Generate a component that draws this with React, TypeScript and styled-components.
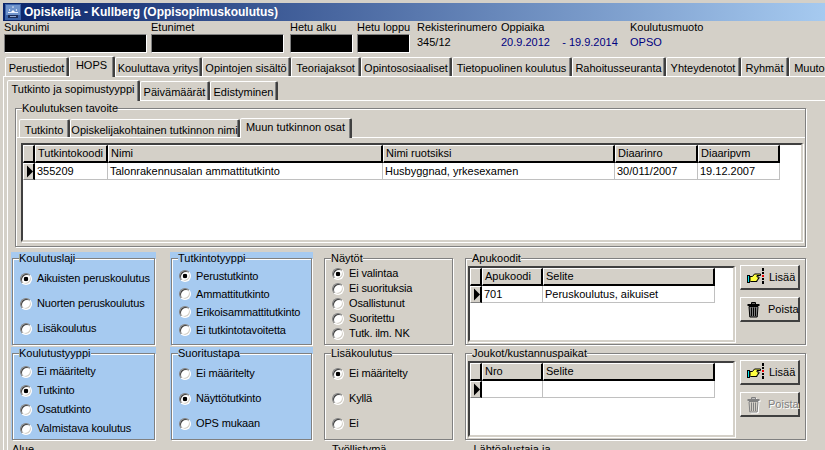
import React from "react";
import styled, { createGlobalStyle } from "styled-components";

const GlobalStyle = createGlobalStyle`
    html, body {
        margin: 0;
        padding: 0;
        background: #D4D0C8;
    }
    * {
        box-sizing: border-box;
    }
`;

const Screen = styled.div`
    width: 825px;
    height: 450px;
    overflow: hidden;
    padding-top: 3px;
    background: #D4D0C8;
    color: #000;
    font-family: "Liberation Sans", Arial, sans-serif;
    font-size: 11px;
    line-height: 13px;
`;

const TitleBar = styled.div`
    height: 18px;
    margin-left: 3px;
    padding-left: 2px;
    display: flex;
    align-items: center;
    gap: 3px;
    background: linear-gradient(90deg, #0A246A, #A6CAF0);
    color: #fff;
    font-size: 12px;
    font-weight: 700;
    white-space: nowrap;
`;

const Header = styled.div`
    height: 35px;
    padding-left: 4px;
    display: flex;
`;

const HeaderCol = styled.div<{ $w: number; $ml?: number }>`
    width: ${(p) => p.$w}px;
    margin-left: ${(p) => p.$ml || 0}px;
    flex: none;
    white-space: nowrap;
`;

const Masked = styled.div`
    height: 19px;
    background: #000;
    border: 1px solid;
    border-color: #808080 #fff #fff #808080;
`;

const HeaderValue = styled.div<{ $blue?: boolean }>`
    height: 17px;
    line-height: 17px;
    color: ${(p) => (p.$blue ? "#000080" : "#000")};
    white-space: pre;
`;

const TabRow = styled.div<{ $h: number; $pl: number }>`
    height: ${(p) => p.$h}px;
    padding-left: ${(p) => p.$pl}px;
    display: flex;
    align-items: flex-end;
    position: relative;
    z-index: 1;
    white-space: nowrap;
`;

const Tab = styled.div<{ $w: number; $active?: boolean; $h: number }>`
    flex: none;
    width: ${(p) => p.$w}px;
    height: ${(p) => p.$h + (p.$active ? 2 : 0)}px;
    margin-bottom: ${(p) => (p.$active ? -1 : 0)}px;
    padding-top: ${(p) => (p.$active ? 2 : 4)}px;
    text-align: center;
    background: #D4D0C8;
    border-style: solid;
    border-width: 1px 2px 0 1px;
    border-color: #fff #404040 transparent #fff;
    border-radius: 2px 2px 0 0;
    box-shadow: inset -1px 0 0 #808080;
`;

const OuterPage = styled.div`
    margin-left: 3px;
    width: 900px;
    height: 380px;
    padding: 2px 0 0 3px;
    border-top: 1px solid #fff;
    border-left: 1px solid #fff;
`;

const InnerPage = styled.div`
    width: 880px;
    height: 360px;
    padding-top: 1px;
    border-top: 1px solid #fff;
    border-left: 1px solid #fff;
`;

const GroupBox = styled.fieldset<{ $blue?: boolean }>`
    margin: 0;
    padding: 0;
    min-width: 0;
    height: 100%;
    border: 1px solid #808080;
    box-shadow: 1px 1px 0 #fff, inset 1px 1px 0 #fff;
    legend {
        margin-left: 6px;
        padding: 0;
        height: 13px;
        line-height: 13px;
        background: ${(p) => (p.$blue ? "#A6CAF0" : "#D4D0C8")};
        white-space: nowrap;
    }
`;

const GoalBox = styled.div`
    height: 145px;
    margin: 0 0 0 7px;
    width: 791px;
`;

const GoalPage = styled.div`
    height: 106px;
    padding: 5px 0 0 4px;
    border-top: 1px solid #fff;
    border-left: 1px solid #fff;
`;

const GridFrame = styled.div<{ $h: number; $w: number }>`
    width: ${(p) => p.$w}px;
    height: ${(p) => p.$h}px;
    background: #fff;
    border: 2px solid;
    border-color: #404040 #d4d0c8 #d4d0c8 #404040;
    box-shadow: 1px 1px 0 #fff;
    overflow: hidden;
`;

const DataTable = styled.table`
    border-collapse: separate;
    border-spacing: 0;
    table-layout: fixed;
    th {
        height: 18px;
        padding: 0 0 0 2px;
        background: #D4D0C8;
        font-weight: 400;
        text-align: left;
        white-space: nowrap;
        overflow: hidden;
        border-style: solid;
        border-width: 1px 2px 2px 1px;
        border-color: #fff #000 #000 #fff;
    }
    td {
        height: 17px;
        padding: 0 0 0 2px;
        white-space: nowrap;
        overflow: hidden;
        border-right: 1px solid #C0C0C0;
        border-bottom: 1px solid #C0C0C0;
    }
    td.indicator {
        padding: 0;
        background: #D4D0C8;
        border-style: solid;
        border-width: 1px 2px 1px 1px;
        border-color: #fff #000 #808080 #fff;
    }
`;

const PanelRow = styled.div`
    height: 95px;
    display: flex;
    align-items: flex-start;
`;

const Panel = styled.div<{ $w: number; $ml: number; $blue?: boolean }>`
    flex: none;
    width: ${(p) => p.$w}px;
    height: 93px;
    margin-left: ${(p) => p.$ml}px;
    padding: 0 1px;
    background: ${(p) => (p.$blue ? "#A6CAF0" : "transparent")};
`;

const Rows = styled.div`
    margin-top: 5px;
`;

const RadioList = styled.div<{ $top: number; $row: number }>`
    padding: ${(p) => p.$top}px 0 0 7px;
    display: grid;
    grid-auto-rows: ${(p) => p.$row}px;
`;

const RadioLabel = styled.label`
    display: flex;
    align-items: center;
    gap: 5px;
    letter-spacing: -0.15px;
    white-space: nowrap;
`;

const RadioInput = styled.input`
    appearance: none;
    flex: none;
    width: 12px;
    height: 12px;
    margin: 0;
    border-radius: 50%;
    background: #fff;
    border: 1px solid;
    border-color: #808080 #fff #fff #808080;
    box-shadow: inset 1px 1px 0 #404040, inset -1px -1px 0 #D4D0C8;
    &:checked {
        background: radial-gradient(circle at center, #000 2px, #fff 2.6px);
    }
`;

const GridWithButtons = styled.div`
    padding: 1px 0 0 2px;
    display: flex;
    gap: 5px;
`;

const SideButtons = styled.div`
    display: flex;
    flex-direction: column;
    gap: 7px;
    margin-top: -1px;
`;

const ToolButton = styled.button<{ $off?: boolean; $gap: number }>`
    width: 60px;
    height: 25px;
    padding: 0 0 0 6px;
    display: flex;
    align-items: center;
    gap: ${(p) => p.$gap}px;
    background: #D4D0C8;
    font: inherit;
    color: ${(p) => (p.$off ? "#808080" : "#000")};
    text-shadow: ${(p) => (p.$off ? "1px 1px 0 #fff" : "none")};
    border-style: solid;
    border-width: 1px 2px 2px 1px;
    border-color: #fff #404040 #404040 #fff;
`;

const BottomRow = styled.div`
    display: flex;
    margin-top: 1px;
`;

const BottomLabel = styled.div<{ $ml: number }>`
    margin-left: ${(p) => p.$ml}px;
    white-space: nowrap;
`;

const AppIcon = () => (
    <svg width="16" height="16" viewBox="0 0 16 16">
        <rect width="16" height="16" fill="#3A62A8" />
        <rect x="1" y="1" width="14" height="10" fill="#6F93CC" />
        <path d="M8 2l1 1.500h-2zM4 5l1.500 1-1.500 1zM12 5l-1.500 1 1.500 1zM8 6l2 2h-4z" fill="#fff" />
        <rect x="3" y="8" width="10" height="1" fill="#E8F0FF" />
        <rect x="3" y="11" width="10" height="3" fill="#1B2C58" />
        <rect x="5" y="12" width="6" height="1" fill="#8FA4CC" />
    </svg>
);

const RowArrow = () => (
    <svg width="9" height="13" viewBox="0 0 9 13" style={{ display: "block", margin: "0 0 0 2px" }}>
        <path d="M1 0.500L7 6.500L1 12.500Z" fill="#000" />
    </svg>
);

const HandIcon = () => (
    <svg width="18" height="18" viewBox="0 0 18 18" style={{ flex: "none" }}>
        <rect x="0.500" y="7.500" width="2" height="7" fill="#00E0E8" stroke="#000" />
        <path d="M3 8.500h2.500l2-2.500h6v1.500h-3.500v1.500h2v1.500h-1v1.500h-1v1.500h-6.500l-0.500-1z" fill="#FFFF40" stroke="#000" strokeWidth="1" />
        <rect x="15" y="0" width="2" height="3" fill="#000" />
        <rect x="15" y="4" width="2" height="2" fill="#000" />
        <rect x="15" y="7" width="2" height="2" fill="#F00000" />
        <rect x="15" y="10" width="2" height="2" fill="#000" />
        <rect x="15" y="13" width="2" height="3" fill="#000" />
    </svg>
);

const TrashIcon = ({ off }: { off?: boolean }) => {
    const line = off ? "#808080" : "#000";
    const fill = off ? "#D4D0C8" : "#808080";
    return (
        <svg width="13" height="17" viewBox="0 0 13 17" style={{ flex: "none", filter: off ? "drop-shadow(1px 1px 0 #fff)" : "none" }}>
            <path d="M4.500 1.500h4v1.500h-4z" fill="none" stroke={line} />
            <rect x="0.500" y="3" width="12" height="2" fill={line} />
            <path d="M2 5.500h9l-0.800 10.500h-7.400z" fill={fill} stroke={line} />
            <path d="M4.500 6.500v8.500M6.500 6.500v8.500M8.500 6.500v8.500" stroke={line} />
        </svg>
    );
};

const outerTabs = [
    ["Perustiedot", 64],
    ["HOPS", 46],
    ["Kouluttava yritys", 87],
    ["Opintojen sisältö", 89],
    ["Teoriajaksot", 70],
    ["Opintososiaaliset", 91],
    ["Tietopuolinen koulutus", 120],
    ["Rahoitusseuranta", 94],
    ["Yhteydenotot", 75],
    ["Ryhmät", 48],
    ["Muutokset", 62],
] as const;

const subTabs = [
    ["Tutkinto ja sopimustyyppi", 133],
    ["Päivämäärät", 70],
    ["Edistyminen", 68],
] as const;

const goalTabs = [
    ["Tutkinto", 51],
    ["Opiskelijakohtainen tutkinnon nimi", 170],
    ["Muun tutkinnon osat", 112],
] as const;

type Choice = { name: string; options: string[]; checked: number; top: number; row: number };

const RadioGroup = ({ name, options, checked, top, row }: Choice) => (
    <RadioList $top={top} $row={row}>
        {options.map((o, i) => (
            <RadioLabel key={o}>
                <RadioInput type="radio" name={name} defaultChecked={i === checked} />
                {o}
            </RadioLabel>
        ))}
    </RadioList>
);

const CodeGrid = ({ head, code, text }: { head: string; code?: string; text?: string }) => (
    <GridFrame $w={267} $h={76}>
        <DataTable style={{ width: 245 }}>
            <colgroup>
                <col width={12} />
                <col width={61} />
                <col width={172} />
            </colgroup>
            <thead>
                <tr>
                    <th />
                    <th>{head}</th>
                    <th>Selite</th>
                </tr>
            </thead>
            <tbody>
                <tr>
                    <td className="indicator"><RowArrow /></td>
                    <td>{code}</td>
                    <td>{text}</td>
                </tr>
            </tbody>
        </DataTable>
    </GridFrame>
);

const CodeButtons = ({ removable }: { removable: boolean }) => (
    <SideButtons>
        <ToolButton $gap={4}><HandIcon />Lisää</ToolButton>
        <ToolButton $gap={8} $off={!removable} disabled={!removable}>
            <TrashIcon off={!removable} />Poista
        </ToolButton>
    </SideButtons>
);

const App = () => (
    <Screen>
        <GlobalStyle />
        <TitleBar>
            <AppIcon />
            Opiskelija - Kullberg (Oppisopimuskoulutus)
        </TitleBar>
        <Header>
            <HeaderCol $w={143}>Sukunimi<Masked /></HeaderCol>
            <HeaderCol $w={133} $ml={4}>Etunimet<Masked /></HeaderCol>
            <HeaderCol $w={63} $ml={6}>Hetu alku<Masked /></HeaderCol>
            <HeaderCol $w={53} $ml={4}>Hetu loppu<Masked /></HeaderCol>
            <HeaderCol $w={84} $ml={7}>Rekisterinumero<HeaderValue>345/12</HeaderValue></HeaderCol>
            <HeaderCol $w={129}>Oppiaika<HeaderValue $blue>20.9.2012    - 19.9.2014</HeaderValue></HeaderCol>
            <HeaderCol $w={90}>Koulutusmuoto<HeaderValue $blue>OPSO</HeaderValue></HeaderCol>
        </Header>
        <TabRow $h={20} $pl={5}>
            {outerTabs.map(([t, w]) => (
                <Tab key={t} $w={w} $h={19} $active={t === "HOPS"}>{t}</Tab>
            ))}
        </TabRow>
        <OuterPage>
            <TabRow $h={21} $pl={0}>
                {subTabs.map(([t, w]) => (
                    <Tab key={t} $w={w} $h={19} $active={t === "Tutkinto ja sopimustyyppi"}>{t}</Tab>
                ))}
            </TabRow>
            <InnerPage>
                <GoalBox>
                    <GroupBox>
                        <legend>Koulutuksen tavoite</legend>
                        <TabRow $h={22} $pl={3}>
                            {goalTabs.map(([t, w]) => (
                                <Tab key={t} $w={w} $h={18} $active={t === "Muun tutkinnon osat"}>{t}</Tab>
                            ))}
                        </TabRow>
                        <GoalPage>
                            <GridFrame $w={782} $h={99}>
                                <DataTable style={{ width: 757 }}>
                                    <colgroup>
                                        <col width={12} />
                                        <col width={73} />
                                        <col width={275} />
                                        <col width={232} />
                                        <col width={83} />
                                        <col width={82} />
                                    </colgroup>
                                    <thead>
                                        <tr>
                                            <th />
                                            <th>Tutkintokoodi</th>
                                            <th>Nimi</th>
                                            <th>Nimi ruotsiksi</th>
                                            <th>Diaarinro</th>
                                            <th>Diaaripvm</th>
                                        </tr>
                                    </thead>
                                    <tbody>
                                        <tr>
                                            <td className="indicator"><RowArrow /></td>
                                            <td>355209</td>
                                            <td>Talonrakennusalan ammattitutkinto</td>
                                            <td>Husbyggnad, yrkesexamen</td>
                                            <td>30/011/2007</td>
                                            <td>19.12.2007</td>
                                        </tr>
                                    </tbody>
                                </DataTable>
                            </GridFrame>
                        </GoalPage>
                    </GroupBox>
                </GoalBox>
                <Rows>
                    <PanelRow>
                        <Panel $w={145} $ml={3} $blue>
                            <GroupBox $blue>
                                <legend>Koulutuslaji</legend>
                                <RadioGroup name="laji" checked={0} top={1} row={25} options={["Aikuisten peruskoulutus", "Nuorten peruskoulutus", "Lisäkoulutus"]} />
                            </GroupBox>
                        </Panel>
                        <Panel $w={143} $ml={14} $blue>
                            <GroupBox $blue>
                                <legend>Tutkintotyyppi</legend>
                                <RadioGroup name="tyyppi" checked={0} top={2} row={18} options={["Perustutkinto", "Ammattitutkinto", "Erikoisammattitutkinto", "Ei tutkintotavoitetta"]} />
                            </GroupBox>
                        </Panel>
                        <Panel $w={131} $ml={10}>
                            <GroupBox>
                                <legend>Näytöt</legend>
                                <RadioGroup name="naytot" checked={0} top={1} row={15} options={["Ei valintaa", "Ei suorituksia", "Osallistunut", "Suoritettu", "Tutk. ilm. NK"]} />
                            </GroupBox>
                        </Panel>
                        <Panel $w={343} $ml={10}>
                            <GroupBox>
                                <legend>Apukoodit</legend>
                                <GridWithButtons>
                                    <CodeGrid head="Apukoodi" code="701" text="Peruskoulutus, aikuiset" />
                                    <CodeButtons removable />
                                </GridWithButtons>
                            </GroupBox>
                        </Panel>
                    </PanelRow>
                    <PanelRow>
                        <Panel $w={145} $ml={3} $blue>
                            <GroupBox $blue>
                                <legend>Koulutustyyppi</legend>
                                <RadioGroup name="koulutustyyppi" checked={1} top={2} row={19} options={["Ei määritelty", "Tutkinto", "Osatutkinto", "Valmistava koulutus"]} />
                            </GroupBox>
                        </Panel>
                        <Panel $w={143} $ml={14} $blue>
                            <GroupBox $blue>
                                <legend>Suoritustapa</legend>
                                <RadioGroup name="tapa" checked={1} top={1} row={25} options={["Ei määritelty", "Näyttötutkinto", "OPS mukaan"]} />
                            </GroupBox>
                        </Panel>
                        <Panel $w={131} $ml={10}>
                            <GroupBox>
                                <legend>Lisäkoulutus</legend>
                                <RadioGroup name="lisa" checked={0} top={1} row={25} options={["Ei määritelty", "Kyllä", "Ei"]} />
                            </GroupBox>
                        </Panel>
                        <Panel $w={343} $ml={10}>
                            <GroupBox>
                                <legend>Joukot/kustannuspaikat</legend>
                                <GridWithButtons>
                                    <CodeGrid head="Nro" />
                                    <CodeButtons removable={false} />
                                </GridWithButtons>
                            </GroupBox>
                        </Panel>
                    </PanelRow>
                    <BottomRow>
                        <BottomLabel $ml={4}>Alue</BottomLabel>
                        <BottomLabel $ml={298}>Työllistymä</BottomLabel>
                        <BottomLabel $ml={87}>Lähtöalustaja ja</BottomLabel>
                    </BottomRow>
                </Rows>
            </InnerPage>
        </OuterPage>
    </Screen>
);

export default App;
